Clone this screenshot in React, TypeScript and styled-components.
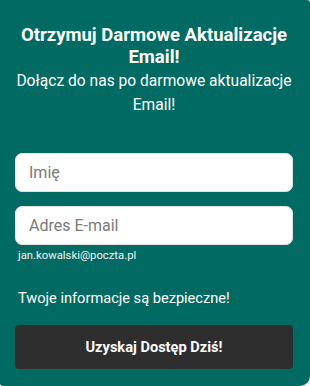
import React from "react";
import styled, { createGlobalStyle } from "styled-components";

const Global = createGlobalStyle`
  html, body { margin: 0; padding: 0; background: #ffffff; }
  body { font-family: Roboto, "Liberation Sans", sans-serif; }
  * { box-sizing: border-box; }
`;

const Card = styled.div`
  width: 310px;
  height: 386px;
  background: #016a63;
  border-radius: 0 3px 10px 3px;
  padding: 24px 17px 0 15px;
  display: flex;
  flex-direction: column;
`;

const Title = styled.h2`
  margin: 0;
  color: #ffffff;
  font-size: 18.5px;
  line-height: 22px;
  font-weight: 700;
  text-align: center;
`;

const Subtitle = styled.p`
  margin: 1px 0 0;
  color: #ffffff;
  font-size: 15.6px;
  line-height: 24px;
  text-align: center;
`;

const Form = styled.form`
  display: flex;
  flex-direction: column;
  margin-top: 36px;
`;

const Input = styled.input<{ $gap?: number }>`
  width: 100%;
  height: 39px;
  border: 1px solid #e3e3e3;
  border-radius: 7px;
  background: #ffffff;
  padding: 0 13px;
  margin-top: ${(p) => p.$gap ?? 0}px;
  font-family: Roboto, "Liberation Sans", sans-serif;
  font-size: 16px;
  color: #333;
  outline: none;
  &::placeholder { color: #7a7a7a; }
`;

const Hint = styled.div`
  margin-top: 4px;
  color: #f2f2f2;
  font-size: 11.3px;
  line-height: 13px;
  padding-left: 3px;
`;

const Secure = styled.div`
  margin-top: 26px;
  color: #ffffff;
  font-size: 14.6px;
  line-height: 20px;
  padding-left: 3px;
`;

const Button = styled.button`
  margin-top: 17px;
  width: 100%;
  height: 44px;
  border: none;
  border-radius: 4px;
  background: #2e2e2e;
  color: #ffffff;
  font-family: Roboto, "Liberation Sans", sans-serif;
  font-size: 14.6px;
  font-weight: 700;
  cursor: pointer;
`;

export default function App() {
  return (
    <>
      <Global />
      <Card>
        <Title>
          Otrzymuj Darmowe Aktualizacje
          <br />
          Email!
        </Title>
        <Subtitle>
          Dołącz do nas po darmowe aktualizacje
          <br />
          Email!
        </Subtitle>
        <Form onSubmit={(e) => e.preventDefault()}>
          <Input placeholder="Imię" />
          <Input $gap={14} placeholder="Adres E-mail" />
          <Hint>jan.kowalski@poczta.pl</Hint>
          <Secure>Twoje informacje są bezpieczne!</Secure>
          <Button type="submit">Uzyskaj Dostęp Dziś!</Button>
        </Form>
      </Card>
    </>
  );
}
